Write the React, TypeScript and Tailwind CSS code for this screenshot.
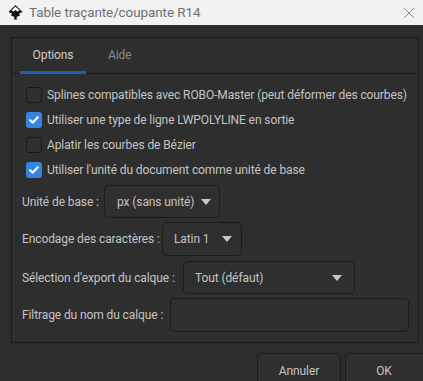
import React from "react";

const Check = ({ checked }: { checked: boolean }) =>
  checked ? (
    <div className="w-4 h-4 rounded-[3px] bg-[#3584e4] flex items-center justify-center shrink-0">
      <svg width="12" height="12" viewBox="0 0 12 12">
        <path d="M2.2 6.2 L4.8 8.6 L9.8 3.2" fill="none" stroke="#fff" strokeWidth="2.2" strokeLinecap="round" strokeLinejoin="round" />
      </svg>
    </div>
  ) : (
    <div className="w-4 h-4 rounded-[3px] border border-[#1a1a1a] bg-[#2f2f2f] shrink-0" />
  );

const Caret = () => (
  <svg width="12" height="8" viewBox="0 0 12 8" className="shrink-0">
    <path d="M1 1 L11 1 L6 7 Z" fill="#c8c8c8" />
  </svg>
);

export default function App() {
  const font = { fontFamily: 'Roboto, "Noto Sans", sans-serif', letterSpacing: "-0.1px" };
  return (
    <div className="w-[423px] h-[381px] overflow-hidden bg-[#2d2d2d] flex flex-col text-[12px]" style={font}>
      <div className="h-[25px] bg-[#f2f2f2] flex items-center shrink-0">
        <svg width="17" height="17" viewBox="0 0 17 17" className="ml-[7px]">
          <path d="M8.5 1 L15.5 8 L12 9.5 L13 11.5 L9.5 13 L10 15.5 L7 15.5 L7.5 13 L4 11.5 L5 9.5 L1.5 8 Z" fill="#111" />
          <path d="M8.5 2.5 L12.5 6.5 L10.5 7.5 L8.5 6 L6.5 7.5 L4.5 6.5 Z" fill="#fff" />
        </svg>
        <span className="ml-[5px] text-[13.5px] text-[#6f6f6f] whitespace-nowrap">
          Table traçante/coupante R14
        </span>
        <div className="ml-auto mr-[6px] w-[16px] h-[16px] flex items-center justify-center">
          <svg width="12" height="12" viewBox="0 0 12 12">
            <path d="M1 1 L11 11 M11 1 L1 11" stroke="#8a8a8a" strokeWidth="1" />
          </svg>
        </div>
      </div>
      <div className="mt-[12px] ml-[11px] w-[408px] h-[306px] shrink-0 border border-[#1c1c1c] bg-[#2e2e2e] flex flex-col">
        <div className="h-[36px] border-b border-[#1c1c1c] flex items-end shrink-0">
          <div className="ml-[8px] w-[66px] h-[35px] flex flex-col items-center justify-center relative">
            <span className="text-[#cfcfcf] -mt-[2px]">Options</span>
            <div className="absolute bottom-[-1px] left-0 right-0 h-[3px] bg-[#1d5fb0]" />
          </div>
          <div className="ml-[22px] h-[35px] flex items-center">
            <span className="text-[#8b8b8b] -mt-[2px]">Aide</span>
          </div>
        </div>
        <div className="flex flex-col pl-[14px] pt-[13px]">
          {[
            [false, "Splines compatibles avec ROBO-Master (peut déformer des courbes)"],
            [true, "Utiliser une type de ligne LWPOLYLINE en sortie"],
            [false, "Aplatir les courbes de Bézier"],
            [true, "Utiliser l'unité du document comme unité de base"],
          ].map(([c, t], i) => (
            <div key={i} className="h-[25px] flex items-start">
              <Check checked={c as boolean} />
              <span className="ml-[5px] leading-[16px] text-[#c4c4c4] whitespace-nowrap">{t as string}</span>
            </div>
          ))}
        </div>
        <div className="flex flex-col pl-[10px] mt-[-2px] text-[#c4c4c4] whitespace-nowrap">
          <div className="flex items-center h-[33px]">
            <span className="shrink-0 w-[82px]">Unité de base :</span>
            <div className="w-[116px] h-[33px] shrink-0 rounded-[5px] border border-[#1b1b1b] bg-[#2f2f2f] flex items-center pl-[12px] gap-[6px]">
              <span>px (sans unité)</span>
              <Caret />
            </div>
          </div>
          <div className="flex items-center h-[34px] mt-[4px]">
            <span className="shrink-0 w-[140px]">Encodage des caractères :</span>
            <div className="w-[80px] h-[34px] shrink-0 rounded-[5px] border border-[#1b1b1b] bg-[#2f2f2f] flex items-center pl-[11px] gap-[12px]">
              <span>Latin 1</span>
              <Caret />
            </div>
          </div>
          <div className="flex items-center h-[33px] mt-[5px]">
            <span className="shrink-0 w-[161px]">Sélection d'export du calque :</span>
            <div className="w-[172px] h-[33px] shrink-0 rounded-[5px] border border-[#1b1b1b] bg-[#2f2f2f] flex items-center pl-[11px] pr-[11px] justify-between">
              <span>Tout (défaut)</span>
              <Caret />
            </div>
          </div>
          <div className="flex items-center h-[34px] mt-[4px]">
            <span className="shrink-0 w-[148px]">Filtrage du nom du calque :</span>
            <div className="w-[239px] h-[34px] shrink-0 rounded-[5px] border border-[#1b1b1b] bg-[#2f2f2f]" />
          </div>
        </div>
      </div>
      <div className="flex justify-end gap-[4px] mt-[10px] mr-[-20px] shrink-0">
        <div className="w-[84px] h-[36px] rounded-[5px] border border-[#1b1b1b] bg-[#2f2f2f] flex items-center justify-center text-[#c4c4c4]">Annuler</div>
        <div className="w-[98px] h-[36px] rounded-[5px] border border-[#1b1b1b] bg-[#2f2f2f] flex items-center justify-center text-[#c4c4c4] pr-[20px]">OK</div>
      </div>
    </div>
  );
}
